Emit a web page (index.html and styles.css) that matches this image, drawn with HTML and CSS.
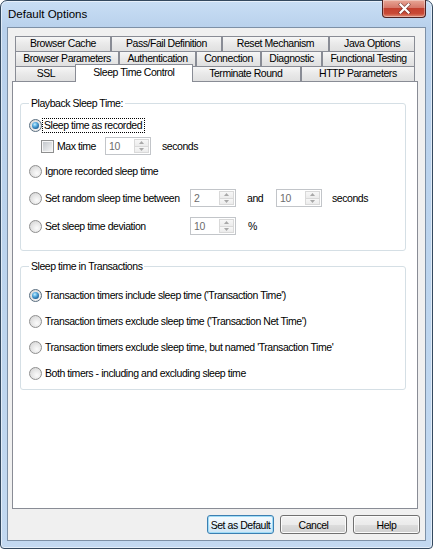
FILE: index.html
```html
<!DOCTYPE html>
<html>
<head>
<meta charset="utf-8">
<title>Default Options</title>
<link rel="stylesheet" href="styles.css">
</head>
<body>
<div class="window">
  <div class="titlebar">
    <span class="title">Default Options</span>
    <div class="close">
      <svg width="13" height="11" viewBox="0 0 13 11">
        <path d="M2.5 1.5 L10.5 9.5 M10.5 1.5 L2.5 9.5" stroke="#4a2424" stroke-width="3.6" stroke-linecap="square" opacity="0.55"/>
        <path d="M2.5 1.5 L10.5 9.5 M10.5 1.5 L2.5 9.5" stroke="#fff" stroke-width="2.2" stroke-linecap="square"/>
      </svg>
    </div>
  </div>
  <div class="client">
    <div class="tabs">
      <div class="tabrow">
        <div class="tab">Browser Cache</div>
        <div class="tab">Pass/Fail Definition</div>
        <div class="tab">Reset Mechanism</div>
        <div class="tab">Java Options</div>
      </div>
      <div class="tabrow">
        <div class="tab">Browser Parameters</div>
        <div class="tab">Authentication</div>
        <div class="tab">Connection</div>
        <div class="tab">Diagnostic</div>
        <div class="tab">Functional Testing</div>
      </div>
      <div class="tabrow">
        <div class="tab tab-min">SSL</div>
        <div class="tab sel">Sleep Time Control</div>
        <div class="tab">Terminate Round</div>
        <div class="tab">HTTP Parameters</div>
      </div>
    </div>
    <div class="pane">
      <fieldset class="group g1">
        <legend>Playback Sleep Time:</legend>
        <div class="row">
          <span class="radio on"></span><span class="focus">Sleep time as recorded</span>
        </div>
        <div class="row r-max">
          <span class="check"></span><span class="lbl lbl-max">Max time</span>
          <div class="spin"><span class="val">10</span><span class="arrows"><span class="up"><svg width="5" height="3" viewBox="0 0 5 3"><path d="M0 3 L2.5 0 L5 3Z" fill="#a8a8a8"/></svg></span><span class="dn"><svg width="5" height="3" viewBox="0 0 5 3"><path d="M0 0 L2.5 3 L5 0Z" fill="#a8a8a8"/></svg></span></span></div>
          <span class="unit">seconds</span>
        </div>
        <div class="row r-ignore">
          <span class="radio"></span><span class="lbl">Ignore recorded sleep time</span>
        </div>
        <div class="row r-random">
          <span class="radio"></span><span class="lbl lbl-wide">Set random sleep time between</span>
          <div class="spin"><span class="val">2</span><span class="arrows"><span class="up"><svg width="5" height="3" viewBox="0 0 5 3"><path d="M0 3 L2.5 0 L5 3Z" fill="#a8a8a8"/></svg></span><span class="dn"><svg width="5" height="3" viewBox="0 0 5 3"><path d="M0 0 L2.5 3 L5 0Z" fill="#a8a8a8"/></svg></span></span></div>
          <span class="and">and</span>
          <div class="spin"><span class="val">10</span><span class="arrows"><span class="up"><svg width="5" height="3" viewBox="0 0 5 3"><path d="M0 3 L2.5 0 L5 3Z" fill="#a8a8a8"/></svg></span><span class="dn"><svg width="5" height="3" viewBox="0 0 5 3"><path d="M0 0 L2.5 3 L5 0Z" fill="#a8a8a8"/></svg></span></span></div>
          <span class="unit">seconds</span>
        </div>
        <div class="row r-dev">
          <span class="radio"></span><span class="lbl lbl-wide">Set sleep time deviation</span>
          <div class="spin"><span class="val">10</span><span class="arrows"><span class="up"><svg width="5" height="3" viewBox="0 0 5 3"><path d="M0 3 L2.5 0 L5 3Z" fill="#a8a8a8"/></svg></span><span class="dn"><svg width="5" height="3" viewBox="0 0 5 3"><path d="M0 0 L2.5 3 L5 0Z" fill="#a8a8a8"/></svg></span></span></div>
          <span class="unit pct">%</span>
        </div>
      </fieldset>
      <fieldset class="group g2">
        <legend>Sleep time in Transactions</legend>
        <div class="row"><span class="radio on"></span><span class="lbl">Transaction timers include sleep time ('Transaction Time')</span></div>
        <div class="row r-tx"><span class="radio"></span><span class="lbl">Transaction timers exclude sleep time ('Transaction Net Time')</span></div>
        <div class="row r-tx"><span class="radio"></span><span class="lbl">Transaction timers exclude sleep time, but named 'Transaction Time'</span></div>
        <div class="row r-tx"><span class="radio"></span><span class="lbl">Both timers - including and excluding sleep time</span></div>
      </fieldset>
    </div>
    <div class="buttons">
      <button class="btn default">Set as Default</button>
      <button class="btn">Cancel</button>
      <button class="btn">Help</button>
    </div>
  </div>
</div>
</body>
</html>
```
FILE: styles.css
```css
* { box-sizing: border-box; }
body {
  margin: 0;
  font-family: "Liberation Sans", Arial, sans-serif;
  font-size: 10.5px;
  letter-spacing: -0.45px;
  color: #000;
}
.window {
  position: relative;
  width: 433px;
  height: 549px;
  border: 1px solid #34495f;
  border-radius: 7px 7px 4px 4px;
  background: linear-gradient(#c9def5, #b9d1ec 26px, #bdd5ee 60%, #c3d9f1);
  box-shadow: inset 0 0 0 1px rgba(255,255,255,0.55);
  padding: 0 6px 7px 6px;
  display: flex;
  flex-direction: column;
}
.titlebar {
  height: 26px;
  display: flex;
  align-items: center;
  padding-left: 1px;
}
.title {
  font-size: 11.5px;
  letter-spacing: 0;
  color: #000;
  margin-top: -1px;
}
.close {
  position: absolute;
  top: -1px;
  right: 6px;
  width: 44px;
  height: 18px;
  border: 1px solid #4e2323;
  border-top: none;
  border-radius: 0 0 4px 4px;
  background: linear-gradient(#e8a797, #d6786a 45%, #c3402f 50%, #c94a36 80%, #e0907a);
  box-shadow: inset 0 0 0 1px rgba(255,255,255,0.35);
  display: flex;
  align-items: center;
  justify-content: center;
}
.client {
  flex: 1;
  background: #f0f0f0;
  border: 1px solid #7d90a6;
  padding: 8px 5px 6px 4px;
  display: flex;
  flex-direction: column;
}
.tabs {
  margin: 0 5px 0 3px;
  display: flex;
  flex-direction: column;
}
.tabrow {
  display: flex;
  height: 15px;
}
.tab {
  flex: 1 1 auto;
  height: 15px;
  border: 1px solid #898c95;
  border-bottom: none;
  background: linear-gradient(#f6f6f6, #e9e9e9 50%, #e0e0e0);
  text-align: center;
  white-space: nowrap;
  line-height: 13px;
  padding: 0 3px;
}
.tab-min { flex: 0 0 62px; }
.tab.sel {
  position: relative;
  z-index: 2;
  margin: -2px -2px 0 -2px;
  height: 18px;
  background: #fff;
  line-height: 15px;
}
.pane {
  flex: 1;
  background: #fff;
  border: 1px solid #898c95;
  margin-right: 2px;
  padding: 15px 11px 0 7px;
}
.group {
  margin: 0;
  min-width: 0;
  border: 1px solid #d5dfe5;
  border-radius: 3px;
  padding: 6px 8px 15px 8px;
}
.group legend {
  padding: 0 2px;
  line-height: 13px;
}
.g2 {
  margin-top: 9px;
  padding-top: 13px;
  padding-bottom: 7px;
}
.row {
  display: flex;
  align-items: center;
  height: 18px;
  white-space: nowrap;
}
.r-max { margin-top: 3px; }
.r-ignore { margin-top: 7px; }
.r-random { margin-top: 9px; }
.r-dev { margin-top: 10px; }
.r-tx { margin-top: 8px; }
.radio {
  position: relative;
  flex: none;
  width: 13px;
  height: 13px;
  border-radius: 50%;
  border: 1px solid #8f8f8f;
  background: radial-gradient(circle at 62% 65%, #fbfbfb 0, #e8e8e8 45%, #cfcfcf 100%);
  margin-right: 3px;
}
.radio.on {
  border-color: #5a6e80;
}
.g1 .radio.on { margin-right: 0; }
.radio.on::after {
  content: "";
  position: absolute;
  left: 2px;
  top: 2px;
  width: 7px;
  height: 7px;
  border-radius: 50%;
  background: radial-gradient(circle at 40% 35%, #c6f0ff 0, #58ace0 35%, #1d5f96 75%, #164a76 100%);
}
.focus {
  border: 1px dotted #000;
  padding: 0 2px 0 1px;
  line-height: 13px;
}
.lbl { line-height: 14px; }
.check {
  flex: none;
  width: 13px;
  height: 13px;
  margin-left: 12px;
  margin-right: 3px;
  border: 1px solid #8e8f8f;
  padding: 1px;
  background: linear-gradient(135deg, #c3c7cc, #f4f4f4) content-box, linear-gradient(#f6f6f6, #f6f6f6) border-box;
}
.lbl-max { width: 48px; }
.lbl-wide { width: 145px; }
.spin {
  flex: none;
  width: 46px;
  height: 18px;
  border: 1px solid #c2c5c9;
  background: #fff;
  display: flex;
  padding: 1px;
}
.spin .val {
  flex: 1;
  color: #6d6d6d;
  padding-left: 2px;
  line-height: 14px;
}
.arrows {
  width: 15px;
  display: flex;
  flex-direction: column;
}
.arrows span {
  flex: 1;
  border: 1px solid #d9d9d9;
  background: linear-gradient(#f7f7f7, #ececec);
  display: flex;
  align-items: center;
  justify-content: center;
}
.arrows .dn { border-top: none; }
.unit { margin-left: 11px; }
.unit.pct { margin-left: 12px; }
.and {
  width: 29px;
  margin-left: 11px;
}
.r-random .unit { margin-left: 10px; }
.buttons {
  display: flex;
  justify-content: flex-end;
  gap: 6px;
  margin-top: 6px;
  height: 19px;
}
.btn {
  width: 67px;
  height: 19px;
  padding: 0;
  font-family: inherit;
  font-size: 10.5px;
  letter-spacing: -0.45px;
  white-space: nowrap;
  color: #000;
  border: 1px solid #707070;
  border-radius: 3px;
  background: linear-gradient(#f2f2f2, #ebebeb 50%, #dddddd 51%, #cfcfcf);
  box-shadow: inset 0 0 0 1px #fbfbfb;
}
.btn.default {
  border-color: #3c7fb1;
  background: linear-gradient(#f4fafe, #e9f4fb 50%, #dcedf8 51%, #d0e6f5);
  box-shadow: inset 0 0 0 1px #9fdcf7;
}
```
